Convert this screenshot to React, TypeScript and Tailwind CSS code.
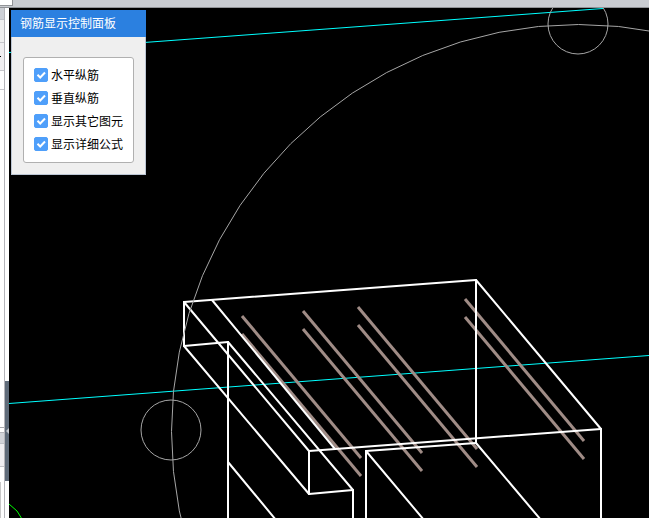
import { useState } from "react";

type Line = [number, number, number, number];

const edges: Line[] = [
  [184, 302, 476, 280],
  [476, 280, 601, 429],
  [476, 280, 476, 443],
  [184, 302, 184, 346],
  [184, 346, 228, 342],
  [228, 342, 228, 520],
  [184, 302, 309, 451],
  [212, 300, 335, 449],
  [184, 346, 309, 494],
  [228, 342, 353, 490],
  [309, 451, 601, 429],
  [309, 451, 309, 494],
  [309, 494, 353, 490],
  [353, 490, 353, 520],
  [228, 462, 276, 520],
  [366, 451, 366, 520],
  [366, 451, 476, 443],
  [366, 451, 424, 520],
  [476, 443, 541, 520],
  [601, 429, 601, 520],
];

const bars: Line[] = [
  [242, 316, 361, 458],
  [242, 334, 361, 476],
  [303, 311, 422, 453],
  [303, 329, 422, 471],
  [358, 307, 477, 449],
  [358, 325, 477, 467],
  [465, 299, 584, 441],
  [465, 317, 584, 459],
];

// orbit ring is drawn as a 64 sided polygon
const ring = Array.from({ length: 64 }, (_, i) => {
  const a = (i * Math.PI) / 32;
  return `${578.5 + 407 * Math.cos(a)},${431.5 + 407 * Math.sin(a)}`;
}).join(" ");

function Scene() {
  return (
    <svg
      viewBox="9 8 640 510"
      preserveAspectRatio="xMinYMin slice"
      className="absolute inset-0 h-full w-full"
      fill="none"
      role="img"
      aria-label="三维视图"
    >
      <g stroke="#00ffff">
        <path d="M9 52.5 L603 8.5" />
        <path d="M9 403.5 L649 355.5" />
      </g>
      <g stroke="#a08c86" strokeWidth="3">
        {bars.map(([x1, y1, x2, y2], i) => (
          <line key={i} x1={x1} y1={y1} x2={x2} y2={y2} />
        ))}
      </g>
      <g stroke="#ffffff" strokeWidth="2" strokeLinecap="round">
        {edges.map(([x1, y1, x2, y2], i) => (
          <line key={i} x1={x1} y1={y1} x2={x2} y2={y2} />
        ))}
      </g>
      <g stroke="#a6a6a6">
        <polygon points={ring} />
        <circle cx="578" cy="24" r="30" />
        <circle cx="171" cy="430" r="30" />
      </g>
      <path d="M9 504 L17 511 L22 519" stroke="#00ff00" />
    </svg>
  );
}

interface OptionProps {
  id: string;
  label: string;
}

function Option({ id, label }: OptionProps) {
  const [checked, setChecked] = useState(true);
  return (
    <label htmlFor={id} className="flex h-[23px] items-center gap-[3px] whitespace-nowrap">
      <span className="relative size-[14px] shrink-0">
        <input
          id={id}
          type="checkbox"
          checked={checked}
          onChange={(e) => setChecked(e.target.checked)}
          className="peer block size-[14px] appearance-none rounded-xs border border-gray-400 bg-white checked:border-[#4f9ffa] checked:bg-[#4f9ffa]"
        />
        <svg
          viewBox="0 0 14 14"
          className="pointer-events-none absolute inset-0 hidden size-[14px] peer-checked:block"
          fill="none"
          stroke="white"
          strokeWidth="2"
        >
          <path d="M3.5 6.8 L6.2 9.5 L11 4.5" />
        </svg>
      </span>
      <span className="pt-0.5">{label}</span>
    </label>
  );
}

function ControlPanel() {
  return (
    <section className="absolute top-[2px] left-[2px] w-[135px] bg-[#efefef] text-xs text-black">
      <h1 className="h-[27px] bg-[#2b80e0] pl-[9px] leading-7 text-white">钢筋显示控制面板</h1>
      <div className="border border-t-0 border-[#bcc6d4] px-[11px] pt-5 pb-[11px]">
        <div className="rounded-[3px] border border-[#b0b0b0] bg-white px-[10px] pt-[5px] pb-[7px]">
          <Option id="horizontal" label="水平纵筋" />
          <Option id="vertical" label="垂直纵筋" />
          <Option id="others" label="显示其它图元" />
          <Option id="formula" label="显示详细公式" />
        </div>
      </div>
    </section>
  );
}

// Right edge of the docked property list
function DockEdge() {
  return (
    <aside className="flex w-[5px] shrink-0 flex-col border-r border-[#b4b4b9] bg-white">
      <div className="h-3 border-b border-[#bfc2c8] bg-[#cdd0d6]" />
      <div className="h-[23px] border-b border-[#c6c6cb] bg-[#f0f0f0]" />
      <div className="flex h-7 items-center border-b border-[#c6c6cb] bg-[#f0eff1]">
        <div className="h-px w-px bg-black" />
      </div>
      <div className="h-[19px] border-b border-[#c6c6cb]" />
      <div className="h-[338px] border-b border-[#a9a9ad]" />
      <div className="h-[5px] border-b border-[#b4b4b9]" />
      <div className="h-[11px] border-b border-[#bfc2c8] bg-[#d1d3d8]" />
      <div className="h-[23px] border-b border-[#c6c6cb] bg-[#f0eff2]" />
      <div className="mt-[15px] w-px grow bg-[#c8c8c8]" />
    </aside>
  );
}

export default function App() {
  return (
    <div className="flex h-screen flex-col overflow-hidden bg-white font-['Liberation_Sans','Noto_Sans_CJK_SC',sans-serif]">
      <header className="h-2 shrink-0 border-b border-[#919397] bg-[#c9ccd1]">
        <div className="h-[6px] w-[13px] border-r border-b border-[#919397] bg-white" />
      </header>
      <div className="flex min-h-0 grow">
        <DockEdge />
        <div className="w-1 shrink-0 bg-white pt-[373px]">
          <button
            type="button"
            aria-label="收起"
            className="flex h-[100px] w-full items-center justify-center bg-[#5f6b79]"
          >
            <svg viewBox="0 0 4 6" className="h-[6px] w-1" fill="#c3c8ce">
              <path d="M4 0 V6 L1 3 Z" />
            </svg>
          </button>
        </div>
        <main className="relative grow overflow-hidden bg-black">
          <Scene />
          <ControlPanel />
        </main>
      </div>
    </div>
  );
}
